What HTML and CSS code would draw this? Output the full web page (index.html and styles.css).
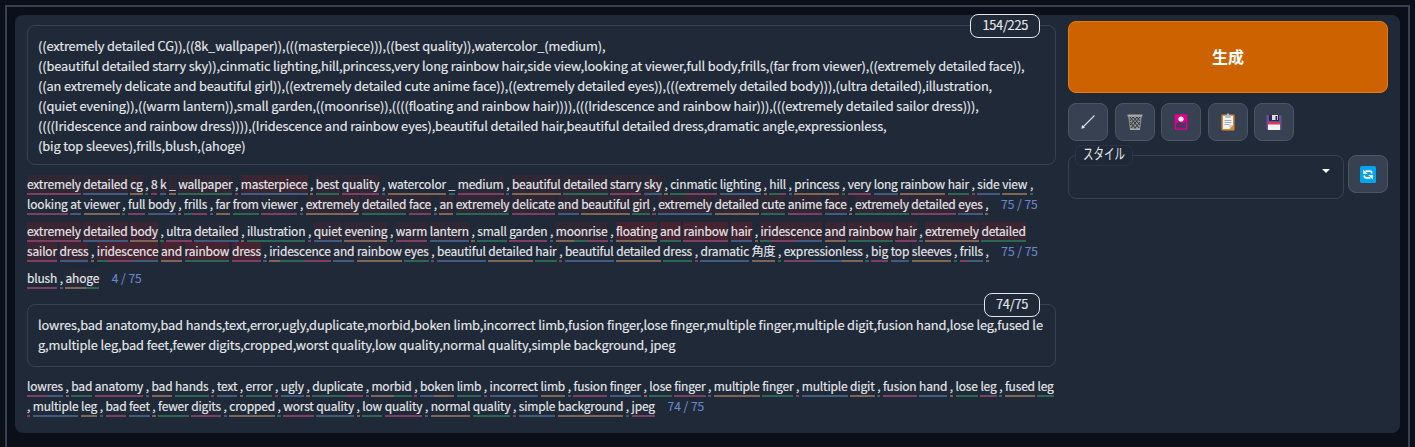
FILE: index.html
```html
<!DOCTYPE html>
<html lang="ja">
<head>
<meta charset="utf-8">
<title>生成</title>
<link rel="stylesheet" href="styles.css">
</head>
<body>
<div class="frame">
<main class="panel">
  <section class="prompts">
    <div class="prompt positive">
      <span class="counter">154/225</span>
      <div class="line">((extremely detailed CG)),((8k_wallpaper)),(((masterpiece))),((best quality)),watercolor_(medium),</div>
      <div class="line">((beautiful detailed starry sky)),cinmatic lighting,hill,princess,very long rainbow hair,side view,looking at viewer,full body,frills,(far from viewer),((extremely detailed face)),</div>
      <div class="line">((an extremely delicate and beautiful girl)),((extremely detailed cute anime face)),((extremely detailed eyes)),(((extremely detailed body))),(ultra detailed),illustration,</div>
      <div class="line">((quiet evening)),((warm lantern)),small garden,((moonrise)),((((floating and rainbow hair)))),(((Iridescence and rainbow hair))),(((extremely detailed sailor dress))),</div>
      <div class="line">((((Iridescence and rainbow dress)))),(Iridescence and rainbow eyes),beautiful detailed hair,beautiful detailed dress,dramatic angle,expressionless,</div>
      <div class="line">(big top sleeves),frills,blush,(ahoge)</div>
    </div>
    <div class="tokens" id="positive-tokens"></div>
    <div class="prompt negative">
      <span class="counter">74/75</span>
      <div class="line">lowres,bad anatomy,bad hands,text,error,ugly,duplicate,morbid,boken limb,incorrect limb,fusion finger,lose finger,multiple finger,multiple digit,fusion hand,lose leg,fused le</div>
      <div class="line">g,multiple leg,bad feet,fewer digits,cropped,worst quality,low quality,normal quality,simple background, jpeg</div>
    </div>
    <div class="tokens" id="negative-tokens"></div>
  </section>
  <aside class="side">
    <button class="generate">生成</button>
    <div class="tools">
      <button class="tool"><svg width="16" height="16" viewBox="0 0 16 16"><path d="M14.5 1.5 2.5 13.5" fill="none" stroke="#d8dbe0" stroke-width="1.1"/><path d="M1.3 14.7 2.2 11 5 13.8z" fill="#e5e7eb"/></svg></button>
      <button class="tool"><svg width="16" height="18" viewBox="0 0 16 18"><path d="M1 2h14l-2 15H3z" fill="#8c8c8c"/><path d="m3 4 9 11M6 4l7 8M10 4l3 4M3 9l6 7M13 4 4 15M10 4l-7 8M6 4 3 8M13 9l-6 7" stroke="#343b49" stroke-width="1"/><path d="M.5 1.5h15v2H.5zM3 15.5h10V17H3z" fill="#a7a7a7"/></svg></button>
      <button class="tool"><svg width="14" height="18" viewBox="0 0 14 18"><rect x=".7" y="1.2" width="12.6" height="15.6" rx="1" fill="#e3008c"/><path d="M2 11 5 8l3 2 4-1v6.5H2z" fill="#5b2c68"/><circle cx="7" cy="6" r="2.6" fill="#fff"/></svg></button>
      <button class="tool"><svg width="14" height="18" viewBox="0 0 14 18"><rect x=".5" y="1.5" width="13" height="16" rx="1" fill="#d58a3a"/><path d="M2 3h10v9l-3.5 4H2z" fill="#f4f4f7"/><path d="M12 12H8.5v4z" fill="#c9c9d0"/><path d="M4 2h2V.6h2V2h2v3H4z" fill="#b9bbc5"/><path d="M3.5 7.5h7M3.5 9.5h7M3.5 11.5h5" stroke="#a6a6b4"/></svg></button>
      <button class="tool"><svg width="16" height="17" viewBox="0 0 16 17"><path d="M.5 1h14l1 1.3V16h-14l-1-1.5z" fill="#66519b"/><path d="M3 1h10v6H3z" fill="#30264a"/><path d="M6 1h6v5H6z" fill="#ddd"/><path d="M9.5 2h1.7v4H9.5z" fill="#30264a"/><path d="M2 9h12v7H2z" fill="#f2f2f5"/><path d="M2 8.5h12v2H2z" fill="#ef3340"/></svg></button>
    </div>
    <div class="style-row">
      <div class="select"><span class="label"><span class="label-text">スタイル</span></span><i class="caret"></i></div>
      <button class="tool"><svg width="16" height="17" viewBox="0 0 16 17"><rect width="16" height="17" rx="1.5" fill="#00a4ef"/><path d="M5.5 5.2h4.3c1.2 0 2 .7 2 2.3M10.5 11.8H6.2c-1.2 0-2-.7-2-2.3" fill="none" stroke="#fff" stroke-width="1.7"/><path d="M3.2 3.5v4.6h4.6zM12.8 13.5V8.9H8.2z" fill="#fff"/></svg></button>
    </div>
  </aside>
</main>
</div>
<script src="tokens.js"></script>
</body>
</html>
```
FILE: styles.css
```css
* { box-sizing: border-box; }
body {
  margin: 0;
  height: 447px;
  overflow: hidden;
  padding: 5px 5px 0;
  background: #0b0f19;
  color: #e5e7eb;
  font-family: "Noto Sans CJK JP", "Open Sans", sans-serif;
}
.frame { height: 460px; border: 2px solid #374151; padding: 8px; }
.panel {
  display: flex;
  gap: 12px;
  height: 418px;
  padding: 0 12px;
  border-radius: 8px;
  background: #1f2937;
}
.prompts { width: 1029px; flex: none; padding-top: 10px; }
.prompt {
  position: relative;
  border: 1px solid #374151;
  border-radius: 8px;
  padding: 10px 10px 0;
  font-size: 12.8px;
  letter-spacing: -0.122px;
  line-height: 20px;
  white-space: nowrap;
  -webkit-text-stroke: 0.15px;
}
.positive { height: 140px; }
.negative { height: 63px; margin-top: 15px; }
.line { height: 20px; }
.counter {
  position: absolute;
  top: -12px;
  right: 15px;
  height: 24px;
  padding: 0 11px;
  border: 1px solid #e5e7eb;
  border-radius: 8px;
  background: #1f2937;
  letter-spacing: -0.3px;
  line-height: 20px;
}
.tokens {
  display: flex;
  flex-direction: column;
  gap: 7px;
  padding-top: 10px;
  font-size: 12px;
  letter-spacing: -0.18px;
  -webkit-text-stroke: 0.15px;
}
.row { display: flex; gap: 2.6px; height: 20px; white-space: nowrap; }
.word { display: flex; }
.piece { height: 20px; line-height: 18px; border-bottom: 2px solid; }
.piece > span { color: #e5e7eb; }
.hue0 { border-color: #7c4064; }
.hue1 { border-color: #405b7e; }
.hue2 { border-color: #7e6656; }
.hue3 { border-color: #2b6754; }
.weight1 { background: #262938; }
.weight2 { background: #302735; }
.weight3 { background: #3b2532; }
.weight4 { background: #462330; }
.total { margin-left: 10px; line-height: 18px; letter-spacing: 0; color: #6d86ca; }
.side { width: 320px; padding-top: 6px; }
button { padding: 0; border: 1px solid #4b5563; border-radius: 8px; background: #374151; font-family: inherit; }
.generate {
  display: block;
  width: 320px;
  height: 72px;
  padding-bottom: 2px;
  border-color: #ea7a0c;
  background: #cc6300;
  color: #fff;
  font-size: 16px;
  font-weight: 700;
}
.tools { display: flex; gap: 6.5px; margin-top: 10px; }
.tool { display: flex; align-items: center; justify-content: center; width: 40px; height: 38px; flex: none; }
.style-row { display: flex; gap: 4px; margin-top: 14px; }
.select {
  position: relative;
  width: 276px;
  height: 44px;
  border: 1px solid #374151;
  border-radius: 8px;
  display: flex;
  justify-content: flex-end;
  padding: 13px 13px 0 0;
}
.label {
  position: absolute;
  left: 6px;
  top: -11px;
  width: 58px;
  height: 21px;
  border: 1px solid #283241;
  border-radius: 6px;
  background: #1f2937;
  padding-left: 7px;
  font-size: 15px;
  line-height: 14px;
}
.label-text { display: inline-block; transform: scaleX(.7); transform-origin: left; white-space: nowrap; }
.caret { width: 8px; height: 4px; background: #fff; clip-path: polygon(0 0, 100% 0, 50% 100%); }
```
FILE: tokens.js
```javascript
// "|" separates subword pieces; "{n ... }" wraps words with emphasis level n.
const positive = [
  ["{2 extremely detailed cg } , {2 8 k _ wallpaper } , {3 masterpiece } , {2 best quality } , watercolor _ {1 medium } , {2 beautiful detailed starry sky } , cin|matic lighting , hi|ll , princess , very long rainbow hair , side view ,",
   "looking at viewer , full body , fr|ills , {1 far from viewer } , {2 extremely detailed face } , {2 an extremely delicate and beautiful girl } , {2 extremely detailed cute anime face } , {2 extremely detailed eyes } ,", "75 / 75"],
  ["{3 extremely detailed body } , {1 ultra detailed } , illustration , {2 quiet evening } , {2 warm lantern } , small garden , {2 mo|on|rise } , {4 floating and rainbow hair } , {3 iri|desc|ence and rainbow hair } , {3 extremely detailed",
   "sailor dress } , {4 iri|desc|ence and rainbow dress } , {1 iri|desc|ence and rainbow eyes } , beautiful detailed hair , beautiful detailed dress , dramatic 角度 , expre|ssion|less , {1 big top sleeves } , fr|ills ,", "75 / 75"],
  ["blush , {1 aho|ge }", "4 / 75"]
];
const negative = [
  ["low|res , bad anatomy , bad hands , text , error , ugly , duplic|ate , mor|bid , bo|ken limb , incorrect limb , fusion finger , lose finger , multiple finger , multiple digit , fusion hand , lose leg , fused leg",
   ", multiple leg , bad feet , fewer digits , cropped , worst quality , low quality , normal quality , simple background , jpeg", "74 / 75"]
];

function element(name, className, parent) {
  const node = document.createElement(name);
  node.className = className;
  parent.append(node);
  return node;
}

function render(id, groups) {
  const host = document.getElementById(id);
  for (const group of groups) {
    const block = element("div", "block", host);
    let hue = 0, weight = 0, row;
    for (const line of group.slice(0, -1)) {
      row = element("div", "row", block);
      for (const item of line.split(" ")) {
        if (item[0] === "{") { weight = item[1]; continue; }
        if (item === "}") { weight = 0; continue; }
        const word = element("span", "word", row);
        for (const part of item.split("|")) {
          const piece = element("span", `piece hue${hue++ % 4} weight${weight}`, word);
          element("span", "", piece).textContent = part;
        }
      }
    }
    element("span", "total", row).textContent = group[group.length - 1];
  }
}

render("positive-tokens", positive);
render("negative-tokens", negative);
```
